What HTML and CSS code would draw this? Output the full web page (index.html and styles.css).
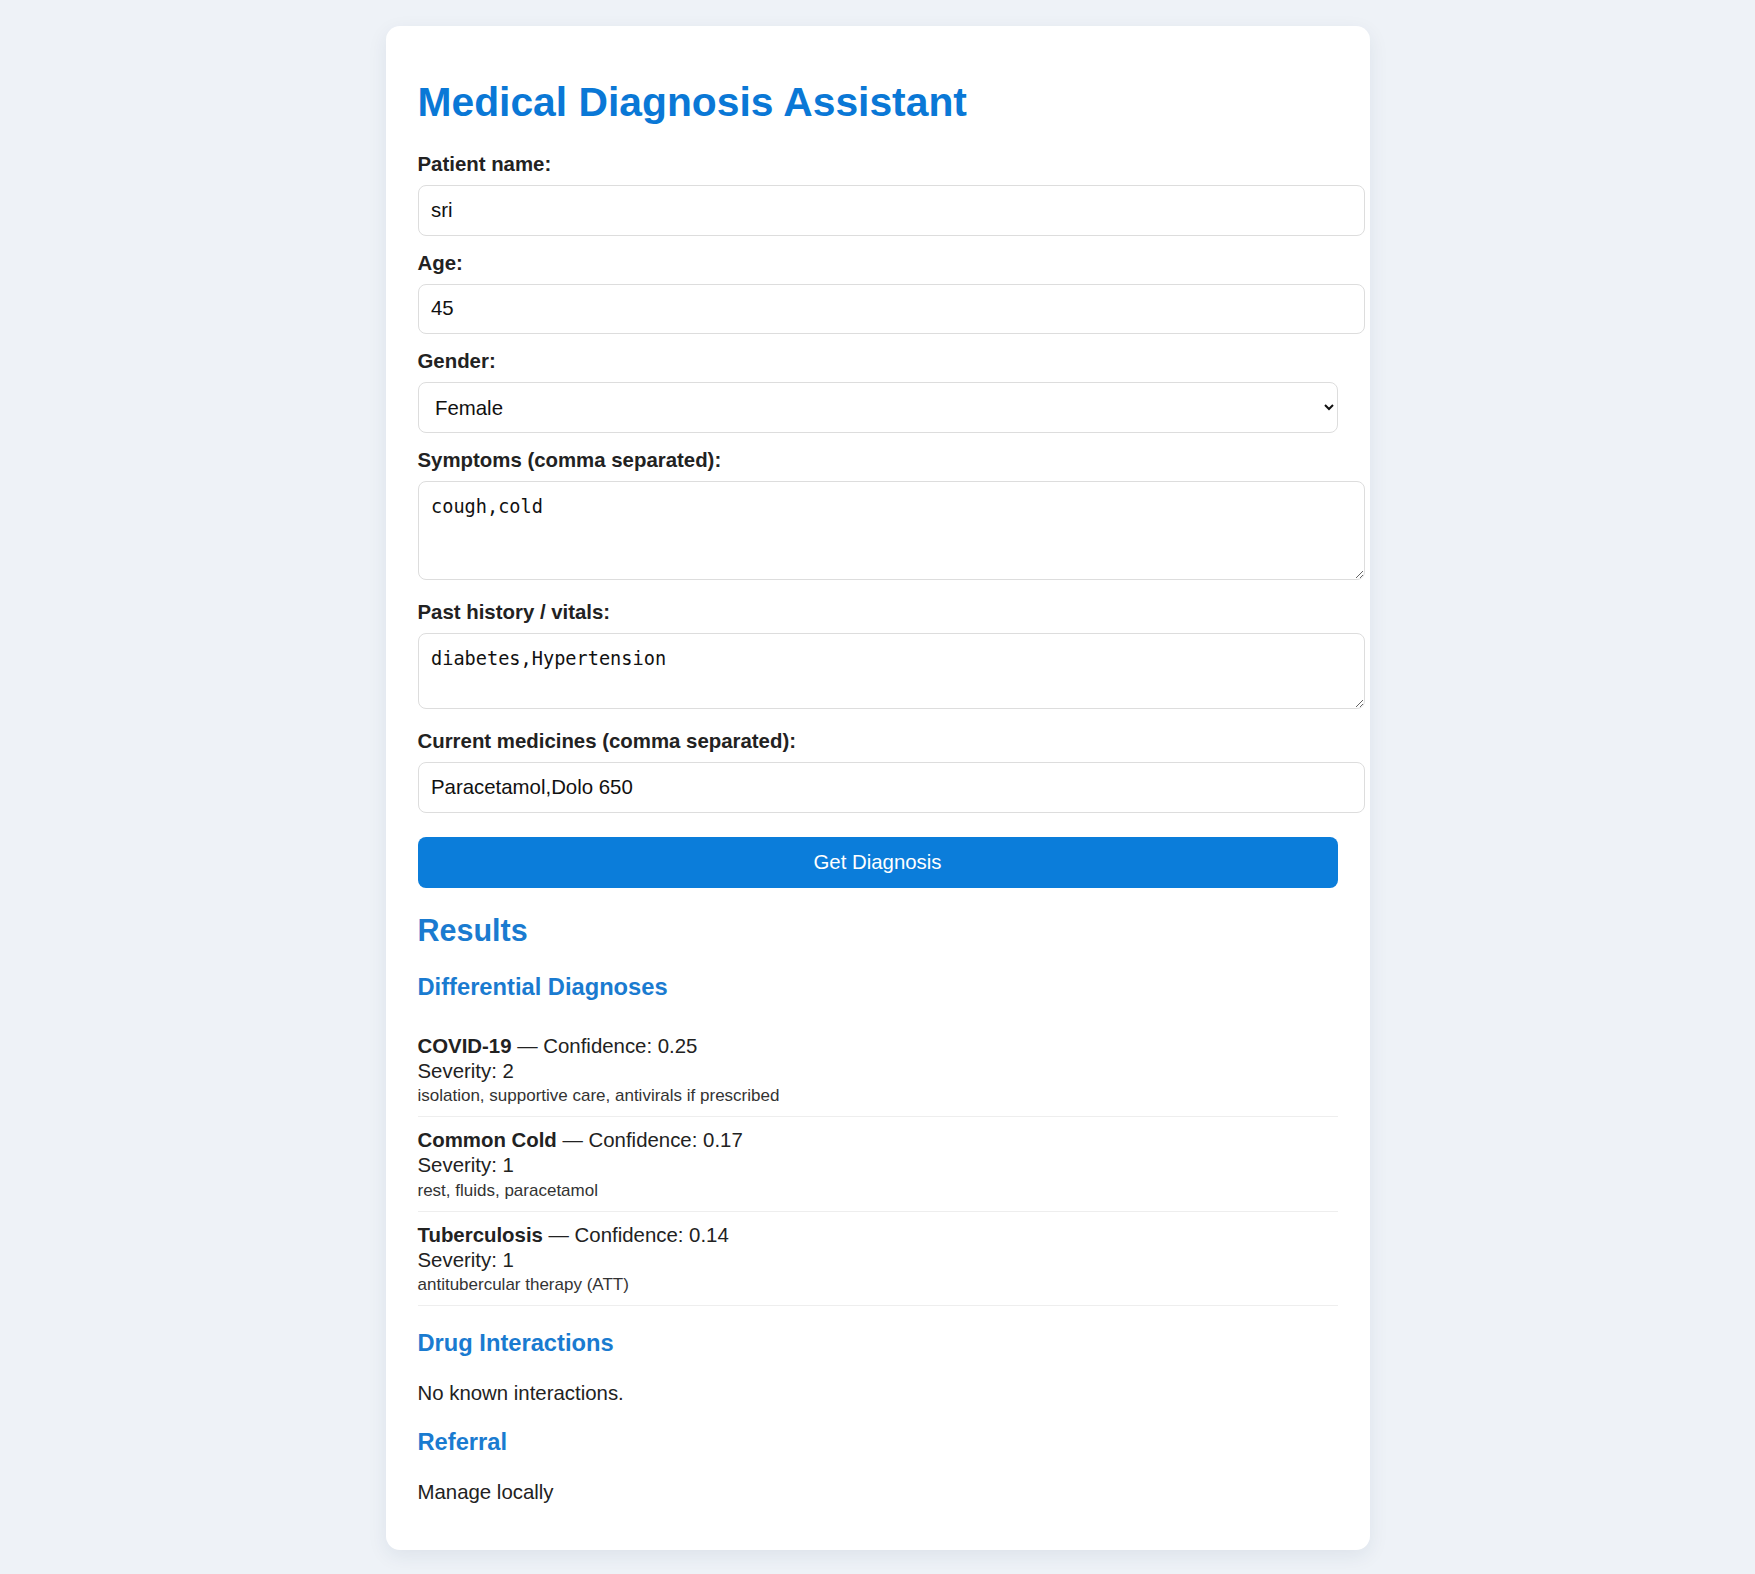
FILE: index.html
```html
<!DOCTYPE html>
<html lang="en">
<head>
    <meta charset="UTF-8">
    <meta name="viewport" content="width=device-width, initial-scale=1.0">
    <title>Medical Diagnosis Assistant</title>
    <link rel="stylesheet" href="styles.css">
</head>
<body>

    <div class="card">
        <h1>Medical Diagnosis Assistant</h1>

        <form class="form" onsubmit="return false;">
            <label for="name">Patient name:</label>
            <input type="text" id="name" value="sri">

            <label for="age">Age:</label>
            <input type="number" id="age" value="45">

            <label for="gender">Gender:</label>
            <select id="gender">
                <option>Male</option>
                <option selected>Female</option>
                <option>Other</option>
            </select>

            <label for="symptoms">Symptoms (comma separated):</label>
            <textarea id="symptoms" class="tall" rows="3">cough,cold</textarea>

            <label for="history">Past history / vitals:</label>
            <textarea id="history" class="short" rows="2">diabetes,Hypertension</textarea>

            <label for="meds">Current medicines (comma separated):</label>
            <input type="text" id="meds" value="Paracetamol,Dolo 650">

            <button type="submit">Get Diagnosis</button>
        </form>

        <div class="results">
            <h2>Results</h2>

            <h3>Differential Diagnoses</h3>
            <ul class="diagnoses">
                <li>
                    <strong>COVID-19</strong> — Confidence: 0.25<br>
                    Severity: 2
                    <small>isolation, supportive care, antivirals if prescribed</small>
                </li>
                <li>
                    <strong>Common Cold</strong> — Confidence: 0.17<br>
                    Severity: 1
                    <small>rest, fluids, paracetamol</small>
                </li>
                <li>
                    <strong>Tuberculosis</strong> — Confidence: 0.14<br>
                    Severity: 1
                    <small>antitubercular therapy (ATT)</small>
                </li>
            </ul>

            <h3>Drug Interactions</h3>
            <p>No known interactions.</p>

            <h3>Referral</h3>
            <p>Manage locally</p>
        </div>
    </div>

</body>
</html>
```

FILE: styles.css
```css
body {
    font-family: "Liberation Sans", Arial, sans-serif;
    font-size: 20.4px;
    color: #222;
    margin: 0;
    padding: 0 0 20px;
    background-color: #eef2f7; /* light grey-blue page */
}

.card {
    width: 920px;
    margin: 26px auto 0;
    padding: 26px 32px;
    background-color: #fff;
    border-radius: 14px;
    box-shadow: 0 6px 20px rgba(30, 50, 90, 0.08);
}

h1 {
    font-size: 40.8px;
    color: #0a78d6;
    margin: 27px 0;
}

.form {
    display: flex;
    flex-direction: column;
}

.form label {
    font-weight: bold;
    margin-bottom: 9px;
}

.form input,
.form textarea {
    width: 100%;
    padding: 12.75px 12.5px;
    border: 1px solid #ddd;
    border-radius: 8px;
    font-family: "Liberation Sans", Arial, sans-serif;
    font-size: 20.4px;
    color: #111;
    background-color: #fff;
    margin: 0 0 16px;
}

.form textarea {
    padding: 12.5px;
    font-family: "DejaVu Sans Mono", "Liberation Mono", monospace;
    font-size: 18.6px;
    line-height: 24px;
    margin-bottom: 21px;
}

.form textarea.tall {
    height: 72px;
}

.form textarea.short {
    height: 49px;
}

.form select {
    box-sizing: border-box;
    width: 100%;
    padding: 12.5px;
    border: 1px solid #ddd;
    border-radius: 8px;
    font-family: "Liberation Sans", Arial, sans-serif;
    font-size: 20.4px;
    color: #111;
    background-color: #fff;
    margin: 0 0 16px;
}

.form button {
    box-sizing: border-box;
    width: 100%;
    margin-top: 8px;
    padding: 14px;
    border: none;
    border-radius: 8px;
    background-color: #0b7dda; /* blue button */
    color: #fff;
    font-family: "Liberation Sans", Arial, sans-serif;
    font-size: 20.4px;
    cursor: pointer;
}

.form button:hover {
    background-color: #0966b3;
}

.results h2 {
    font-size: 30.5px;
    color: #1a7bd0;
    margin: 25.5px 0;
}

.results h3 {
    font-size: 23.7px;
    color: #1a7bd0;
    margin: 23.5px 0 22px;
}

.diagnoses {
    list-style: none;
    margin: 0;
    padding: 0;
}

.diagnoses li {
    padding: 11px 0 10px;
    line-height: 25px;
    border-bottom: 1px solid #eee;
}

.diagnoses small {
    display: block;
    margin-top: 1.5px;
    font-size: 17px;
    line-height: 21px;
    color: #333;
}

.results p {
    margin: 25.5px 0 20px;
}
```
